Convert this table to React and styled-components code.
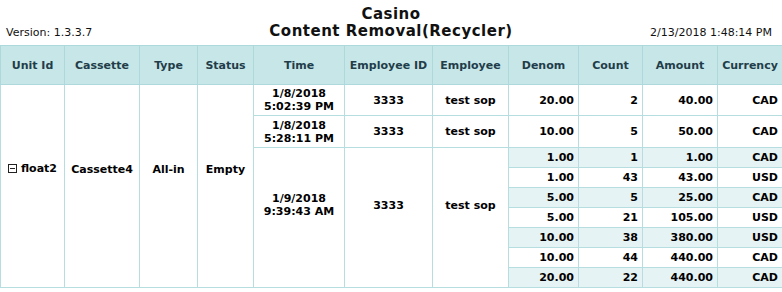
import React from "react";
import styled, { createGlobalStyle } from "styled-components";

const GlobalStyle = createGlobalStyle`
  html, body {
    margin: 0;
    padding: 0;
    background: #fff;
    overflow: hidden;
  }
  body {
    font-family: "DejaVu Sans", Verdana, sans-serif;
    color: #000;
  }
`;

const columns = [
  { label: "Unit Id", width: 64 },
  { label: "Cassette", width: 75 },
  { label: "Type", width: 58 },
  { label: "Status", width: 56 },
  { label: "Time", width: 91 },
  { label: "Employee ID", width: 88 },
  { label: "Employee", width: 76 },
  { label: "Denom", width: 70 },
  { label: "Count", width: 64 },
  { label: "Amount", width: 75 },
  { label: "Currency", width: 65 },
];

const groups = [
  {
    time: ["1/8/2018", "5:02:39 PM"],
    empId: "3333",
    employee: "test sop",
    height: 31,
    items: [["20.00", "2", "40.00", "CAD"]],
  },
  {
    time: ["1/8/2018", "5:28:11 PM"],
    empId: "3333",
    employee: "test sop",
    height: 32,
    items: [["10.00", "5", "50.00", "CAD"]],
  },
  {
    time: ["1/9/2018", "9:39:43 AM"],
    empId: "3333",
    employee: "test sop",
    height: 20,
    lift: 25,
    items: [
      ["1.00", "1", "1.00", "CAD"],
      ["1.00", "43", "43.00", "USD"],
      ["5.00", "5", "25.00", "CAD"],
      ["5.00", "21", "105.00", "USD"],
      ["10.00", "38", "380.00", "USD"],
      ["10.00", "44", "440.00", "CAD"],
      ["20.00", "22", "440.00", "CAD"],
    ],
  },
];

const Page = styled.div`
  width: 782px;
`;

const TopBar = styled.header`
  display: grid;
  grid-template-columns: 1fr auto 1fr;
  align-items: end;
  height: 45px;
`;

const Version = styled.div`
  font-size: 11px;
  line-height: 13px;
  color: #111;
  padding: 0 0 6px 6px;
`;

const Stamp = styled(Version)`
  text-align: right;
  padding: 0 10px 6px 0;
`;

const Title = styled.h1`
  align-self: start;
  margin: 0;
  padding-top: 6px;
  font-size: 15px;
  letter-spacing: 0.5px;
  font-weight: bold;
  text-align: center;
  color: #111;
`;

const TitleLine = styled.span`
  display: block;
  line-height: 17px;
`;

const Grid = styled.table`
  border-collapse: collapse;
  table-layout: fixed;
  width: 783px;
  font-size: 11px;
`;

const Row = styled.tr`
  height: ${(p) => p.$h}px;
`;

const Head = styled.th`
  padding: 0;
  background: #c7e6e7;
  color: #223d4a;
  border: 1px solid #aed9dc;
  font-weight: bold;
  text-align: center;
  vertical-align: middle;
`;

const Cell = styled.td`
  border: 1px solid #b6dddf;
  padding: 0 ${(p) => (p.$align === "right" ? "4px" : "2px")}
    ${(p) => p.$lift || 0}px;
  text-align: ${(p) => p.$align || "center"};
  vertical-align: middle;
  font-weight: bold;
  line-height: 13px;
  white-space: nowrap;
  background: ${(p) => (p.$band ? "#e6f3f4" : "#fff")};
`;

const Unit = styled.span`
  display: inline-flex;
  align-items: center;
  gap: 4px;
`;

const Toggle = () => (
  <svg width="9" height="9" viewBox="0 0 9 9">
    <rect x="0.5" y="0.5" width="8" height="8" fill="#fff" stroke="#222" />
    <line x1="2" y1="4.5" x2="7" y2="4.5" stroke="#222" />
  </svg>
);

export default function App() {
  const total = groups.reduce((n, g) => n + g.items.length, 0);

  return (
    <Page>
      <GlobalStyle />
      <TopBar>
        <Version>Version: 1.3.3.7</Version>
        <Title>
          <TitleLine>Casino</TitleLine>
          <TitleLine>Content Removal(Recycler)</TitleLine>
        </Title>
        <Stamp>2/13/2018 1:48:14 PM</Stamp>
      </TopBar>

      <Grid>
        <colgroup>
          {columns.map((c) => (
            <col key={c.label} style={{ width: c.width }} />
          ))}
        </colgroup>
        <thead>
          <Row $h={39}>
            {columns.map((c) => (
              <Head key={c.label}>{c.label}</Head>
            ))}
          </Row>
        </thead>
        <tbody>
          {groups.map((g, gi) =>
            g.items.map((item, ii) => {
              const many = g.items.length > 1;
              return (
                <Row key={`${gi}-${ii}`} $h={g.height}>
                  {gi === 0 && ii === 0 && (
                    <>
                      <Cell rowSpan={total} $lift={34}>
                        <Unit>
                          <Toggle />
                          float2
                        </Unit>
                      </Cell>
                      <Cell rowSpan={total} $lift={34}>Cassette4</Cell>
                      <Cell rowSpan={total} $lift={34}>All-in</Cell>
                      <Cell rowSpan={total} $lift={34}>Empty</Cell>
                    </>
                  )}
                  {ii === 0 && (
                    <>
                      <Cell rowSpan={g.items.length} $lift={g.lift}>
                        {g.time[0]}
                        <br />
                        {g.time[1]}
                      </Cell>
                      <Cell rowSpan={g.items.length} $lift={g.lift}>
                        {g.empId}
                      </Cell>
                      <Cell rowSpan={g.items.length} $lift={g.lift}>
                        {g.employee}
                      </Cell>
                    </>
                  )}
                  {item.map((v, vi) => (
                    <Cell key={vi} $align="right" $band={many && ii % 2 === 0}>
                      {v}
                    </Cell>
                  ))}
                </Row>
              );
            })
          )}
        </tbody>
      </Grid>
    </Page>
  );
}
